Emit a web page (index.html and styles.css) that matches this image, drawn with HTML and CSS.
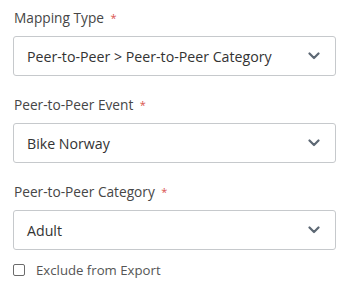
FILE: index.html
```html
<!DOCTYPE html>
<html>
<head>
<meta charset="utf-8">
<link rel="stylesheet" href="styles.css">
</head>
<body>
<div class="form">
  <div class="field">
    <div class="label">Mapping Type <span class="req">*</span></div>
    <div class="select"><span class="value">Peer-to-Peer &gt; Peer-to-Peer Category</span><svg class="chev" width="12" height="8" viewBox="0 0 12 8"><path d="M1.5 1.5 L6 6 L10.5 1.5" fill="none" stroke="#5d6874" stroke-width="2.2" stroke-linecap="round" stroke-linejoin="round"/></svg></div>
  </div>
  <div class="field">
    <div class="label">Peer-to-Peer Event <span class="req">*</span></div>
    <div class="select"><span class="value">Bike Norway</span><svg class="chev" width="12" height="8" viewBox="0 0 12 8"><path d="M1.5 1.5 L6 6 L10.5 1.5" fill="none" stroke="#5d6874" stroke-width="2.2" stroke-linecap="round" stroke-linejoin="round"/></svg></div>
  </div>
  <div class="field">
    <div class="label">Peer-to-Peer Category <span class="req">*</span></div>
    <div class="select"><span class="value">Adult</span><svg class="chev" width="12" height="8" viewBox="0 0 12 8"><path d="M1.5 1.5 L6 6 L10.5 1.5" fill="none" stroke="#5d6874" stroke-width="2.2" stroke-linecap="round" stroke-linejoin="round"/></svg></div>
  </div>
  <label class="check"><span class="box"></span><span class="check-text">Exclude from Export</span></label>
</div>
</body>
</html>
```
FILE: styles.css
```css
html, body {
  margin: 0;
  padding: 0;
  background: #ffffff;
}
body {
  font-family: "Open Sans", "Liberation Sans", sans-serif;
  width: 348px;
  height: 286px;
  overflow: hidden;
}
.form {
  padding: 9px 12px 0 13px;
}
.field {
  margin-bottom: 20px;
}
.field:nth-of-type(3) {
  margin-bottom: 12px;
}
.label {
  font-size: 13.7px;
  line-height: 18px;
  color: #464646;
  margin-bottom: 9px;
  padding-left: 1px;
}
.req {
  color: #d9534f;
  font-size: 11px;
  margin-left: 3px;
  vertical-align: 1px;
}
.select {
  box-sizing: border-box;
  height: 40px;
  border: 1px solid #c6c9cc;
  border-radius: 3px;
  display: flex;
  align-items: center;
  justify-content: space-between;
  padding: 0 15px 0 13px;
}
.value {
  font-size: 14.2px;
  color: #333333;
}
.chev {
  display: block;
}
.check {
  display: flex;
  align-items: center;
  gap: 11px;
}
.box {
  box-sizing: border-box;
  width: 12px;
  height: 12px;
  border: 1px solid #6b6b6b;
  border-radius: 2px;
}
.check-text {
  font-size: 13.2px;
  color: #555555;
  line-height: 16px;
}
```
